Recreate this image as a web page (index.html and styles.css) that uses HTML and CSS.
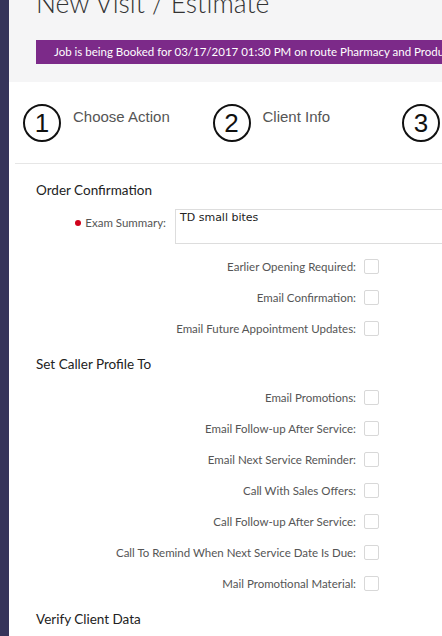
FILE: index.html
```html
<!DOCTYPE html>
<html lang="en">
<head>
<meta charset="utf-8">
<title>New Visit / Estimate</title>
<link rel="stylesheet" href="styles.css">
</head>
<body>
<div class="app">
  <aside class="rail"></aside>
  <main class="main">
    <header class="head">
      <h1 class="title">New Visit / Estimate</h1>
      <div class="banner">Job is being Booked for 03/17/2017 01:30 PM on route Pharmacy and Products</div>
    </header>
    <nav class="steps">
      <div class="step"><span class="num">1</span><span class="step-label">Choose Action</span></div>
      <div class="step"><span class="num">2</span><span class="step-label">Client Info</span></div>
      <div class="step"><span class="num">3</span><span class="step-label">Confirm</span></div>
    </nav>
    <section class="form">
      <h2 class="section-title">Order Confirmation</h2>
      <div class="exam-row">
        <label class="exam-label required" for="exam">Exam Summary:</label>
        <textarea id="exam" class="exam-input">TD small bites</textarea>
      </div>
      <div class="check-row"><label>Earlier Opening Required:</label><input type="checkbox" class="box"></div>
      <div class="check-row"><label>Email Confirmation:</label><input type="checkbox" class="box"></div>
      <div class="check-row"><label>Email Future Appointment Updates:</label><input type="checkbox" class="box"></div>

      <h2 class="section-title">Set Caller Profile To</h2>
      <div class="check-row"><label>Email Promotions:</label><input type="checkbox" class="box"></div>
      <div class="check-row"><label>Email Follow-up After Service:</label><input type="checkbox" class="box"></div>
      <div class="check-row"><label>Email Next Service Reminder:</label><input type="checkbox" class="box"></div>
      <div class="check-row"><label>Call With Sales Offers:</label><input type="checkbox" class="box"></div>
      <div class="check-row"><label>Call Follow-up After Service:</label><input type="checkbox" class="box"></div>
      <div class="check-row"><label>Call To Remind When Next Service Date Is Due:</label><input type="checkbox" class="box"></div>
      <div class="check-row"><label>Mail Promotional Material:</label><input type="checkbox" class="box"></div>

      <h2 class="section-title">Verify Client Data</h2>
    </section>
  </main>
</div>
</body>
</html>
```
FILE: styles.css
```css
html, body {
  margin: 0;
  padding: 0;
  height: 100%;
  overflow: hidden;
  background: #ffffff;
  font-family: "Lato", "Liberation Sans", sans-serif;
}

.app {
  display: flex;
  min-height: 100%;
}

.rail {
  flex: 0 0 9px;
  background: #35345a;
}

.main {
  flex: 1;
  min-width: 0;
  overflow: hidden;
}

.head {
  display: flow-root;
  background: #f5f5f6;
  height: 82px;
  padding-left: 27px;
  box-sizing: border-box;
}

.title {
  margin: -11px 0 0 0;
  font-size: 26.5px;
  line-height: 28px;
  font-weight: 300;
  color: #333333;
  white-space: nowrap;
}

.banner {
  margin-top: 23px;
  height: 24px;
  line-height: 24px;
  width: 600px;
  background: #7c2a89;
  color: #ffffff;
  font-size: 11.5px;
  padding-left: 18px;
  white-space: nowrap;
}

.steps {
  display: flex;
  margin-left: 6px;
  padding: 22px 0 21px 8px;
  border-bottom: 1px solid #e6e6e6;
  white-space: nowrap;
}

.step {
  flex: 0 0 189.5px;
  display: flex;
  align-items: flex-start;
}

.num {
  flex: 0 0 38px;
  width: 38px;
  height: 38px;
  box-sizing: border-box;
  border: 2.5px solid #111111;
  border-radius: 50%;
  display: flex;
  align-items: center;
  justify-content: center;
  font-family: "Liberation Sans", Arial, sans-serif;
  font-size: 26px;
  color: #111111;
}

.step-label {
  margin-left: 12px;
  margin-top: 4px;
  font-family: "Liberation Sans", Arial, sans-serif;
  font-size: 15px;
  line-height: 18px;
  color: #555555;
}

.form {
  padding-left: 27px;
}

.section-title {
  margin: 11px 0 0 0;
  font-size: 13.5px;
  line-height: 18px;
  font-weight: 400;
  color: #222222;
}

.form > .section-title:first-child {
  margin-top: 17px;
}

.section-title + .check-row {
  margin-top: 9px;
}

.exam-row {
  display: flex;
  align-items: flex-start;
  margin-top: 10px;
  margin-bottom: 7px;
}

.exam-label {
  flex: 0 0 130px;
  box-sizing: border-box;
  padding-top: 7px;
  text-align: right;
  font-size: 11.5px;
  line-height: 14px;
  color: #555555;
}

.required::before {
  content: "";
  display: inline-block;
  width: 6px;
  height: 6px;
  border-radius: 50%;
  background: #d0021b;
  margin-right: 4px;
  vertical-align: 1px;
}

.exam-input {
  flex: 0 0 320px;
  margin: 0 0 0 9px;
  width: 320px;
  height: 35px;
  box-sizing: border-box;
  border: 1px solid #dddddd;
  padding: 1px 4px;
  font-family: "DejaVu Sans", Verdana, sans-serif;
  font-size: 11px;
  line-height: 14px;
  color: #222222;
  resize: none;
  overflow: hidden;
  outline: none;
}

.check-row {
  display: flex;
  align-items: center;
  justify-content: flex-end;
  gap: 8px;
  width: 343px;
  height: 31px;
}

.check-row label {
  font-size: 11.5px;
  line-height: 14px;
  color: #555555;
  white-space: nowrap;
}

.box {
  appearance: none;
  -webkit-appearance: none;
  margin: 0;
  width: 15px;
  height: 15px;
  border: 1px solid #d8d8d8;
  border-radius: 2px;
  background: #ffffff;
  flex: 0 0 15px;
}
```
